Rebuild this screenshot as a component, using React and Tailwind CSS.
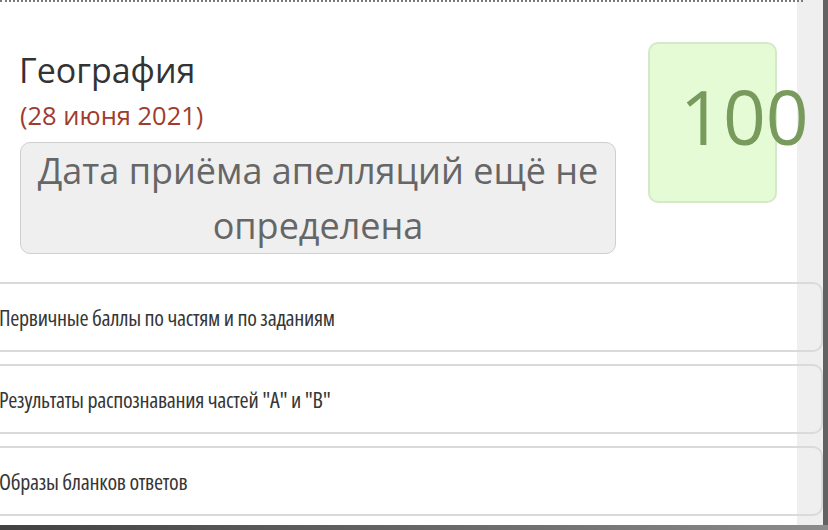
export default function App() {
  const rows = [
    'Первичные баллы по частям и по заданиям',
    'Результаты распознавания частей "A" и "B"',
    'Образы бланков ответов',
  ];
  return (
    <div className="relative h-[530px] w-[828px] overflow-hidden bg-[linear-gradient(to_right,#ffffff_797px,#efefef_797px,#efefef_823px,#626262_823px)] font-['Open_Sans',sans-serif]">
      <div className="flex h-[525px] flex-col">
        <div className="h-[2px] w-[803px] border-t-2 border-dotted border-[#7a7a7a]" />
        <div className="flex items-start gap-8 pl-5 pt-10">
          <div className="flex w-[596px] flex-col pt-2">
            <h2 className="-ml-px text-[34px] leading-[40px] text-[#333]">География</h2>
            <div className="mt-[10px] text-[25.5px] leading-[30px] text-[#a03c2c]">(28 июня 2021)</div>
            <div className="mt-3 rounded-[10px] border border-[#cfcfcf] bg-[#efefef] text-center text-[36px] leading-[55px] text-[#666]">
              Дата приёма апелляций ещё не
              <br />
              определена
            </div>
          </div>
          <div className="h-[161px] w-[129px] rounded-[10px] border-2 border-[#d6e8ca] bg-[#e5fbd6] pl-[30px]">
            <div className="whitespace-nowrap pt-[27px] text-[75px] leading-[90px] text-[#789a5c]">100</div>
          </div>
        </div>
        <div className="-ml-5 mt-7 flex w-[843px] flex-col gap-3">
          {rows.map((r) => (
            <div
              key={r}
              className="flex h-[70px] items-center rounded-[10px] border-2 border-[#dadada] pl-[17px] text-[22px] font-[450] leading-[30px] tracking-[-0.3px] text-[#363636] font-stretch-condensed"
            >
              {r}
            </div>
          ))}
        </div>
      </div>
      <div className="h-[5px] bg-gradient-to-r from-[#424242] to-[#8c8c8c]" />
    </div>
  );
}
